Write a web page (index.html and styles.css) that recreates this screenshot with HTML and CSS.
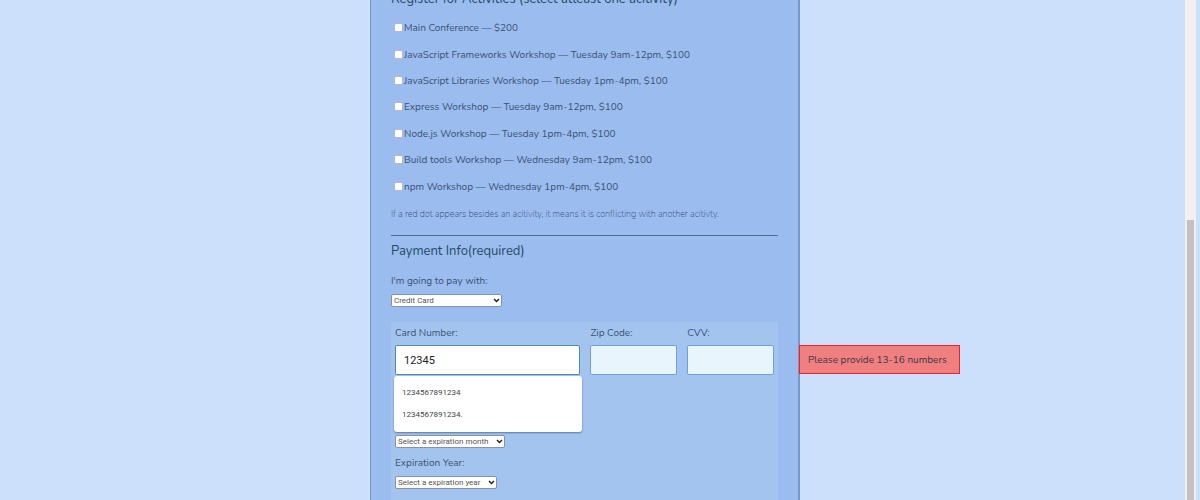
FILE: index.html
```html
<!DOCTYPE html>
<html lang="en">
<head>
<meta charset="utf-8">
<title>Conference registration</title>
<link rel="stylesheet" href="styles.css">
</head>
<body>
<main class="page">
  <form class="form">
    <section class="activities">
      <h2 class="legend">Register for Activities (select atleast one acitivity)</h2>
      <div class="activity-list">
        <label class="activity"><input type="checkbox">Main Conference — $200</label>
        <label class="activity"><input type="checkbox">JavaScript Frameworks Workshop — Tuesday 9am-12pm, $100</label>
        <label class="activity"><input type="checkbox">JavaScript Libraries Workshop — Tuesday 1pm-4pm, $100</label>
        <label class="activity"><input type="checkbox">Express Workshop — Tuesday 9am-12pm, $100</label>
        <label class="activity"><input type="checkbox">Node.js Workshop — Tuesday 1pm-4pm, $100</label>
        <label class="activity"><input type="checkbox">Build tools Workshop — Wednesday 9am-12pm, $100</label>
        <label class="activity"><input type="checkbox">npm Workshop — Wednesday 1pm-4pm, $100</label>
      </div>
      <p class="note">If a red dot appears besides an acitivity, it means it is conflicting with another acitivty.</p>
    </section>
    <section class="payment">
      <h2 class="legend">Payment Info(required)</h2>
      <label class="label pay-label" for="payment">I'm going to pay with:</label>
      <div class="select method">
        <select id="payment"><option>Credit Card</option></select>
        <svg class="arrow" viewBox="0 0 7 5"><path d="M1 1l2.500 2.500L6 1"/></svg>
      </div>
      <div class="card">
        <div class="card-row">
          <div class="field">
            <label class="label" for="cc">Card Number:</label>
            <input class="input active" id="cc" type="text" value="12345">
            <ul class="suggestions">
              <li>1234567891234</li>
              <li>1234567891234.</li>
            </ul>
            <div class="error" role="alert">Please provide 13-16 numbers</div>
          </div>
          <div class="field">
            <label class="label" for="zip">Zip Code:</label>
            <input class="input" id="zip" type="text">
          </div>
          <div class="field">
            <label class="label" for="cvv">CVV:</label>
            <input class="input" id="cvv" type="text">
          </div>
        </div>
        <div class="select month">
          <select aria-label="Expiration month"><option>Select a expiration month</option></select>
          <svg class="arrow" viewBox="0 0 7 5"><path d="M1 1l2.500 2.500L6 1"/></svg>
        </div>
        <label class="label year-label" for="year">Expiration Year:</label>
        <div class="select year">
          <select id="year"><option>Select a expiration year</option></select>
          <svg class="arrow" viewBox="0 0 7 5"><path d="M1 1l2.500 2.500L6 1"/></svg>
        </div>
      </div>
    </section>
  </form>
</main>
<div class="scrollbar"><div class="thumb"></div></div>
</body>
</html>
```
FILE: styles.css
```css
* {
  box-sizing: border-box;
}

body {
  display: flex;
  height: 100vh;
  margin: 0;
  overflow: hidden;
  background: #ccdffb;
  color: #3a5274;
  font-family: Nunito, "Open Sans", sans-serif;
  font-size: 10px;
  line-height: 14px;
}

.page {
  display: flex;
  flex: 1;
  justify-content: center;
  padding-right: 15px;
}

.form {
  flex: none;
  width: 430px;
  min-height: 100vh;
  padding: 0 20px;
  background: #9bbcee;
  border: solid #7598c6;
  border-width: 0 2px 0 1px;
}

.legend {
  margin: 0;
  color: #244a66;
  font-size: 13px;
  font-weight: 400;
  line-height: 18px;
}

.activities {
  margin-top: -10px;
  border-bottom: 1px solid #4c7199;
}

.activity-list {
  display: grid;
  grid-auto-rows: 1fr;
  height: 185px;
  margin-top: 7px;
}

.activity {
  display: flex;
  align-items: center;
}

.activity input {
  appearance: none;
  width: 9px;
  height: 9px;
  margin: 0 1px 1px 3px;
  background: #fff;
  border: 1px solid #b4bac6;
  border-radius: 2px;
}

.note {
  margin: 7px 0 14px;
  color: #2f4a72;
  font-size: 9px;
  font-weight: 200;
}

.payment {
  padding-top: 6px;
}

.label {
  display: block;
}

.pay-label {
  margin: 14px 0 6px;
}

.select {
  position: relative;
  height: 13px;
}

.select select {
  appearance: none;
  display: block;
  width: 100%;
  height: 100%;
  padding: 0 2px;
  background: #fff;
  border: 1px solid #8793a5;
  border-radius: 2px;
  color: #555;
  font-family: Roboto, sans-serif;
  font-size: 8px;
}

.arrow {
  position: absolute;
  top: 4px;
  right: 2px;
  width: 7px;
  height: 5px;
  fill: none;
  stroke: #222;
  stroke-width: 1.5;
  pointer-events: none;
}

.method {
  width: 111px;
}

.month {
  width: 110px;
}

.year {
  width: 102px;
}

.card {
  margin-top: 15px;
  padding: 4px 4px 20px;
  background: #a4c4f0;
}

.card-row {
  position: relative;
  display: grid;
  grid-template-columns: 186fr 87fr 87fr;
  gap: 10px;
  margin-bottom: 60px;
}

.field:first-child {
  position: static;
}

.input {
  display: block;
  width: 100%;
  height: 30px;
  margin-top: 5px;
  padding: 0 9px;
  background: #e8f5fc;
  border: 1px solid #6f9fe2;
  border-radius: 2px;
  color: #222;
  font-family: Roboto, sans-serif;
  font-size: 11px;
}

.active {
  padding: 0 8px;
  background: #fff;
  border-color: #4d8db0;
  outline: none;
}

.suggestions {
  position: absolute;
  top: 50px;
  left: -1px;
  z-index: 1;
  width: 188px;
  margin: 0;
  padding: 6px 8px;
  background: #fff;
  border-radius: 3px;
  box-shadow: 0 1px 2px #5878a0;
  color: #444;
  font-family: Roboto, sans-serif;
  font-size: 8px;
  line-height: 22px;
  list-style: none;
}

.error {
  position: absolute;
  top: 19px;
  left: calc(100% + 25px);
  padding: 7px 12px 6px 8px;
  background: #f08080;
  border: 1px solid #f02030;
  color: #3d3548;
  font-size: 10px;
  line-height: 14px;
  white-space: nowrap;
}

.year-label {
  margin: 8px 0 6px;
}

.scrollbar {
  width: 11px;
  margin-right: 4px;
  padding: 220px 2px 0;
  background: #f0f0f0;
}

.thumb {
  height: 100%;
  background: #c1c1c1;
}
```
